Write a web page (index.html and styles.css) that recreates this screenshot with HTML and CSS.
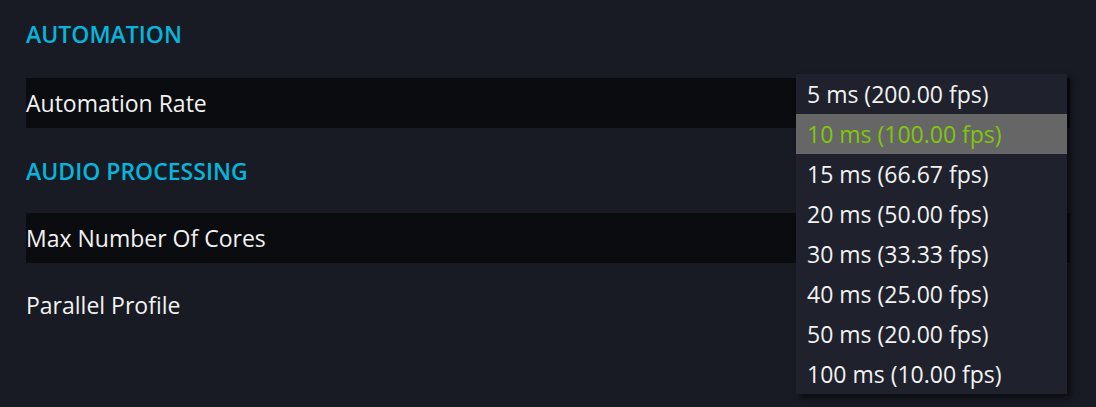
FILE: index.html
```html
<!DOCTYPE html>
<html lang="en">
<head>
    <meta charset="UTF-8">
    <meta name="viewport" content="width=device-width, initial-scale=1.0">
    <title>Settings</title>
    <link rel="stylesheet" href="styles.css">
</head>
<body>
    <div class="settings">
        <h2 class="section-title first">AUTOMATION</h2>
        <div class="setting-group">
            <div class="setting-row dark">Automation Rate</div>
        </div>

        <h2 class="section-title">AUDIO PROCESSING</h2>
        <div class="setting-group">
            <div class="setting-row dark">Max Number Of Cores</div>
            <div class="setting-row">Parallel Profile</div>
        </div>
    </div>

    <ul class="dropdown">
        <li>5 ms (200.00 fps)</li>
        <li class="selected">10 ms (100.00 fps)</li>
        <li>15 ms (66.67 fps)</li>
        <li>20 ms (50.00 fps)</li>
        <li>30 ms (33.33 fps)</li>
        <li>40 ms (25.00 fps)</li>
        <li>50 ms (20.00 fps)</li>
        <li>100 ms (10.00 fps)</li>
    </ul>
</body>
</html>
```

FILE: styles.css
```css
body {
    margin: 0;
    background-color: #181b23;
    font-family: "Open Sans", "Noto Sans", sans-serif;
    color: #f2f2f2;
    height: 407px;
    overflow: hidden;
}
.settings {
    padding: 0 26px;
}
.section-title {
    margin: 0;
    height: 85px;
    display: flex;
    align-items: center;
    font-size: 23px;
    font-weight: 600;
    color: #07b5dc;
}
.section-title.first {
    height: 78px;
    align-items: flex-start;
    padding-top: 18px;
    box-sizing: border-box;
}
.setting-group {
    display: flex;
    flex-direction: column;
    gap: 17px;
}
.setting-row {
    height: 50px;
    display: flex;
    align-items: center;
    font-size: 23px;
}
.setting-row.dark {
    background-color: #0b0c10;
}
.dropdown {
    position: absolute;
    left: 796px;
    top: 74px;
    width: 271px;
    margin: 0;
    padding: 0;
    list-style: none;
    background-color: #1f222d;
    box-shadow: 4px 4px 6px rgba(0, 0, 0, 0.55);
}
.dropdown li {
    height: 40px;
    display: flex;
    align-items: center;
    padding-left: 11px;
    font-size: 23px;
    color: #f2f2f2;
}
.dropdown li.selected {
    background-color: #666666;
    color: #80c70a;
}
```
